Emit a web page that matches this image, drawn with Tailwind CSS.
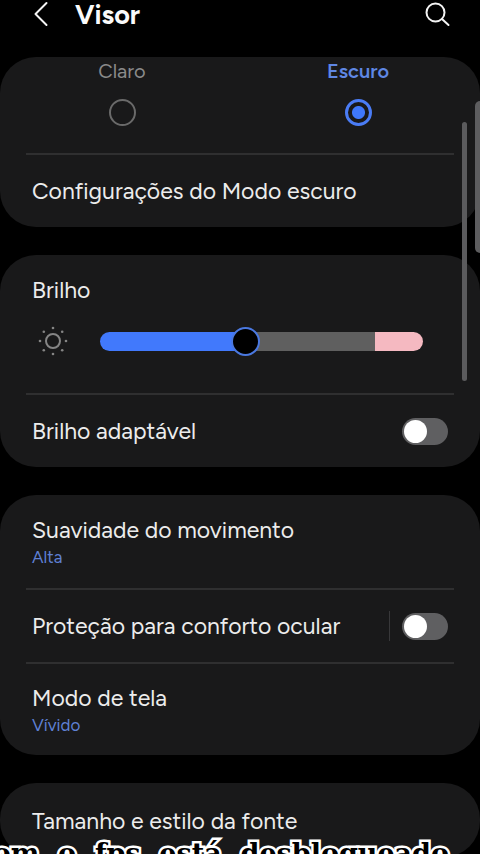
<!DOCTYPE html>
<html lang="pt-BR">
<head>
<meta charset="utf-8">
<meta name="viewport" content="width=device-width, initial-scale=1">
<title>Visor</title>
<script src="https://cdn.jsdelivr.net/npm/@tailwindcss/browser@4"></script>
</head>
<body class="bg-black">
<div class="relative flex h-screen flex-col overflow-hidden bg-black font-['Figtree','Roboto',sans-serif] text-[23px] leading-7 text-[#ececec]">
  <header class="flex h-[57px] shrink-0 items-start pr-[29px] pl-[32px]">
    <button type="button" aria-label="Voltar" class="block">
      <svg class="h-7 w-5" viewBox="0 0 20 28" fill="none" stroke="#f4f4f4" stroke-width="2" stroke-linecap="round" stroke-linejoin="round"><path d="M14.500 3 3.500 14 14.500 25"/></svg>
    </button>
    <h1 class="ml-[23px] flex-1 text-[27px] leading-[30px] font-bold text-[#fafafa]">Visor</h1>
    <button type="button" aria-label="Pesquisar" class="block">
      <svg class="h-7 w-7" viewBox="0 0 28 28" fill="none" stroke="#f4f4f4" stroke-width="2" stroke-linecap="round"><circle cx="12.500" cy="12.500" r="9"/><path d="M19 19 25.500 25"/></svg>
    </button>
  </header>

  <main class="flex flex-col gap-7">
    <section class="rounded-[36px] bg-[#19191a]">
      <fieldset class="grid grid-cols-2 px-1 pb-[27px] text-xl leading-7">
        <label class="flex flex-col items-center gap-[14px] text-[#8a8a8a]">Claro
          <input type="radio" name="modo" class="size-[27px] appearance-none rounded-full border-2 border-[#6a6a6a] checked:border-[3px] checked:border-[#4a7cf5] checked:bg-[radial-gradient(circle,#3f78fb_6px,transparent_7px)]">
        </label>
        <label class="flex flex-col items-center gap-[14px] font-semibold text-[#5f87e4]">Escuro
          <input type="radio" name="modo" checked class="size-[27px] appearance-none rounded-full border-2 border-[#6a6a6a] checked:border-[3px] checked:border-[#4a7cf5] checked:bg-[radial-gradient(circle,#3f78fb_6px,transparent_7px)]">
        </label>
      </fieldset>
      <hr class="mx-[26px] border-t-2 border-[#2f2f30]">
      <a href="#" class="block px-8 py-[22px]">Configurações do Modo escuro</a>
    </section>

    <section class="rounded-[36px] bg-[#19191a]">
      <div class="px-8 pt-[21px] pb-9">
        <label for="brilho" class="block">Brilho</label>
        <div class="mt-[21px] flex items-center pr-[25px]">
          <svg class="mr-8 ml-1 h-8 w-8 shrink-0" viewBox="0 0 32 32" fill="none" stroke="#858585" stroke-width="2"><circle cx="17" cy="16" r="7"/><g fill="#858585" stroke="none"><circle cx="17" cy="3" r="1.300"/><circle cx="17" cy="29" r="1.300"/><circle cx="4" cy="16" r="1.300"/><circle cx="30" cy="16" r="1.300"/><circle cx="7.800" cy="6.800" r="1.300"/><circle cx="26.200" cy="6.800" r="1.300"/><circle cx="7.800" cy="25.200" r="1.300"/><circle cx="26.200" cy="25.200" r="1.300"/></g></svg>
          <input id="brilho" type="range" min="0" max="255" value="114" class="h-[19px] min-w-0 flex-1 appearance-none rounded-full bg-[linear-gradient(90deg,#4179fc_45%,#5f5f5f_45%,#5f5f5f_85%,#f5b9c1_85%)] [&::-webkit-slider-thumb]:size-[29px] [&::-webkit-slider-thumb]:appearance-none [&::-webkit-slider-thumb]:rounded-full [&::-webkit-slider-thumb]:border-2 [&::-webkit-slider-thumb]:border-[#4a78e0] [&::-webkit-slider-thumb]:bg-black">
        </div>
      </div>
      <hr class="mx-[26px] border-t-2 border-[#2f2f30]">
      <div class="flex items-center justify-between px-8 py-[22px]">
        <label for="adaptavel">Brilho adaptável</label>
        <input id="adaptavel" type="checkbox" role="switch" class="h-[27px] w-[46px] appearance-none rounded-full bg-[#5f5f61] p-[2px] before:block before:size-[23px] before:rounded-full before:bg-white checked:before:ml-auto">
      </div>
    </section>

    <section class="rounded-[36px] bg-[#19191a]">
      <a href="#" class="block px-8 pt-[21px] pb-[18px]">Suavidade do movimento
        <span class="block text-[17px] leading-[26px] text-[#5f80d4]">Alta</span>
      </a>
      <hr class="mx-[26px] border-t-2 border-[#2f2f30]">
      <div class="flex items-center px-8 py-[22px]">
        <label for="conforto" class="flex-1">Proteção para conforto ocular</label>
        <span class="-my-px mr-3 h-[30px] w-px bg-[#38383a]"></span>
        <input id="conforto" type="checkbox" role="switch" class="h-[27px] w-[46px] appearance-none rounded-full bg-[#5f5f61] p-[2px] before:block before:size-[23px] before:rounded-full before:bg-white checked:before:ml-auto">
      </div>
      <hr class="mx-[26px] border-t-2 border-[#2f2f30]">
      <a href="#" class="block px-8 pt-5 pb-[17px]">Modo de tela
        <span class="block text-[17px] leading-[26px] text-[#5f80d4]">Vívido</span>
      </a>
    </section>

    <section class="rounded-[36px] bg-[#19191a]">
      <a href="#" class="block px-8 pt-6 pb-[22px]">Tamanho e estilo da fonte</a>
    </section>
  </main>

  <div class="absolute top-[122px] right-[13px] h-[259px] w-[5px] rounded-full bg-[#5b5b5d]"></div>
  <div class="absolute top-[101px] right-0 h-[152px] w-[5px] rounded-l-md bg-[#5d5d5f]"></div>
  <p class="absolute top-[838px] right-[31px] font-['DejaVu_Serif',serif] text-[27px] leading-8 font-bold whitespace-pre text-black [-webkit-text-stroke:5px_white] [paint-order:stroke_fill]">com  o  fps  está  desbloqueado</p>
</div>
</body>
</html>
